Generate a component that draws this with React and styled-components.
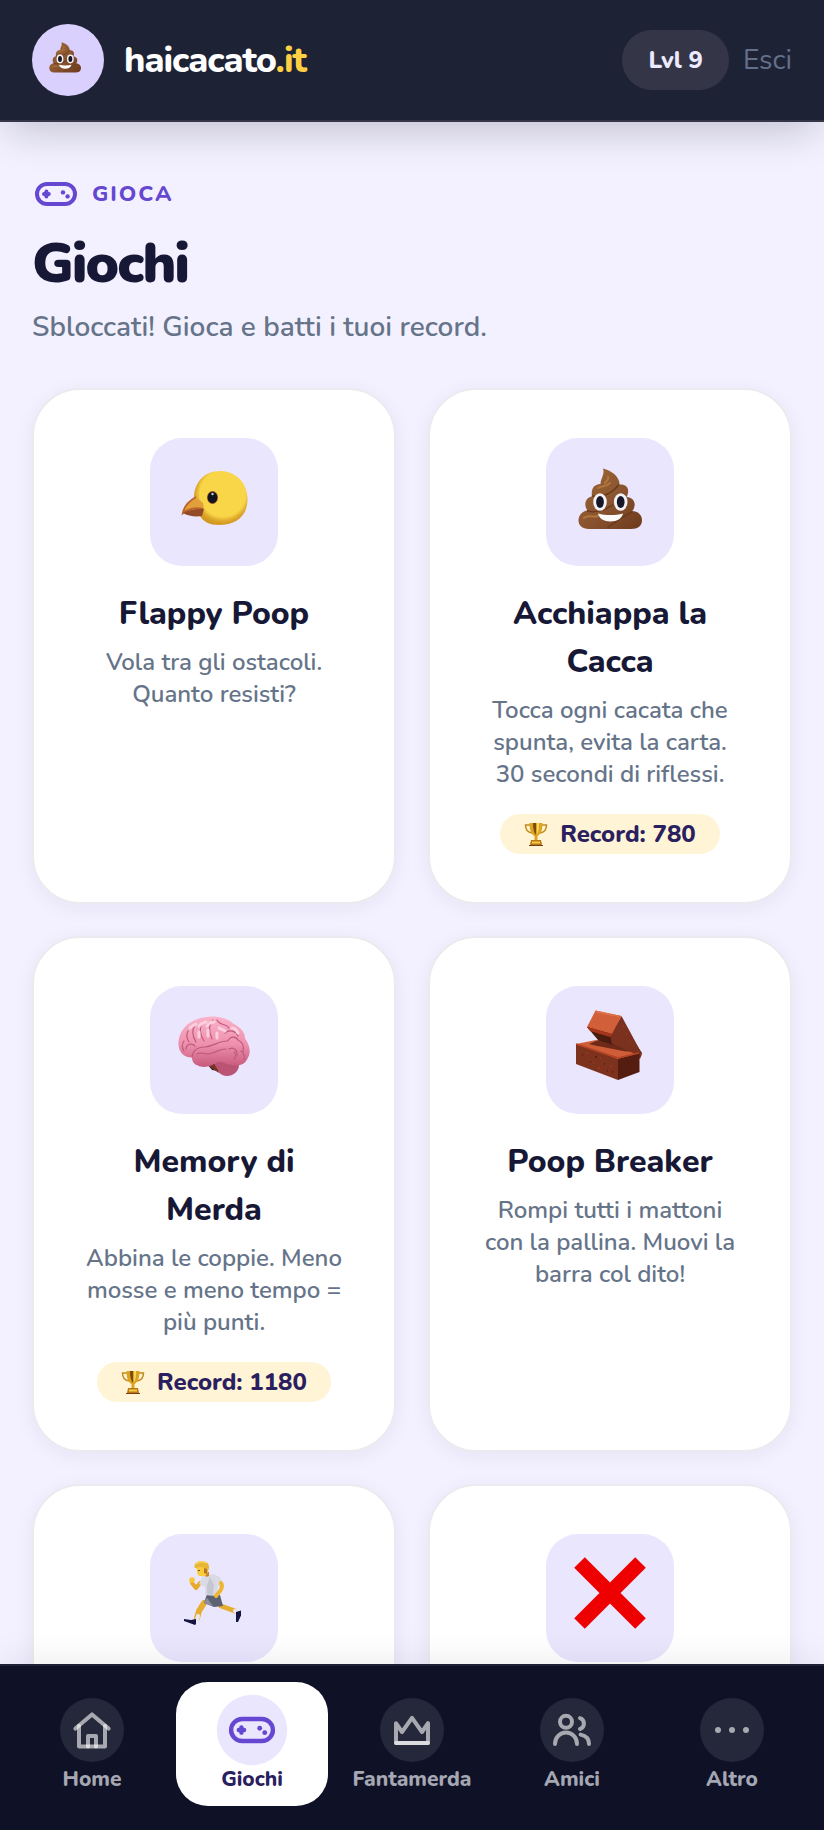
import React from "react";
import styled, { createGlobalStyle } from "styled-components";

const games = [
  {
    id: "flappy",
    icon: "bird",
    title: "Flappy Poop",
    text: "Vola tra gli ostacoli. Quanto resisti?",
  },
  {
    id: "acchiappa",
    icon: "poop",
    title: "Acchiappa la Cacca",
    text: "Tocca ogni cacata che spunta, evita la carta. 30 secondi di riflessi.",
    record: 780,
  },
  {
    id: "memory",
    icon: "brain",
    title: "Memory di Merda",
    text: "Abbina le coppie. Meno mosse e meno tempo = più punti.",
    record: 1180,
  },
  {
    id: "breaker",
    icon: "brick",
    title: "Poop Breaker",
    text: "Rompi tutti i mattoni con la pallina. Muovi la barra col dito!",
  },
  { id: "runner", icon: "runner" },
  { id: "cross", icon: "cross" },
];

const tabs = [
  { id: "home", label: "Home" },
  { id: "giochi", label: "Giochi" },
  { id: "fantamerda", label: "Fantamerda" },
  { id: "amici", label: "Amici" },
  { id: "altro", label: "Altro" },
];

const Bird = () => (
  <>
    <defs>
      <radialGradient id="birdHead" cx="0.54" cy="0.42" r="0.56">
        <stop offset="0.76" stopColor="#f9d648" />
        <stop offset="0.9" stopColor="#dfa92b" />
        <stop offset="1" stopColor="#d39a22" />
      </radialGradient>
    </defs>
    <path
      d="M44 60c0-16 11-27 26-27 16 0 27.500 12 27.500 28 0 17-11 26-29 26-9 0-14-3-17-7-5-5-7.500-12-7.500-20z"
      fill="url(#birdHead)"
    />
    <path d="M46 59c-7 4-12 10-13 16l12 2 9-5-1-7z" fill="#e2a03a" />
    <path d="M46 59c-7 4-12 10-13 16 5-4 12-6 20-4" fill="none" stroke="#bd632b" strokeWidth="2" />
    <path d="M33 75c6-3 13-4.500 21-4l-2 7c-7 1-14 0-19-3z" fill="#934a27" />
    <ellipse cx="62.500" cy="59.500" rx="5.500" ry="6.500" fill="#9b5a1c" />
    <ellipse cx="62.500" cy="59.500" rx="4.800" ry="5.800" fill="#11131f" />
    <circle cx="62.500" cy="56" r="1.200" fill="#c9cde0" />
  </>
);

const Poop = () => (
  <>
    <defs>
      <linearGradient id="poopTier" x1="0" y1="0" x2="1" y2="1">
        <stop offset="0" stopColor="#a06a35" />
        <stop offset="0.5" stopColor="#8b5530" />
        <stop offset="1" stopColor="#6d3a1c" />
      </linearGradient>
    </defs>
    <path
      d="M57 30.500c9 2 17 9 16.500 16 6-.5 9.500 3 8.500 8-.3 2-.8 3.500-1.500 4.500 6 0 9 5 8 9-.3 2-1 4-2.500 5 6 0 10 4 10 9 0 6-4 9-11 9H43c-7 0-10.500-4-10.500-8.500 0-5.500 4-9.500 9-10-4-5-2.500-13 4.500-14-1-7 1-12 8.500-12.500 0-6 4.500-9 2.500-15.500z"
      fill="url(#poopTier)"
    />
    <path
      d="M46.500 58c10 2 20-3 26-11M41.500 73c8 2 18-1 25-6M62 89c6-4 14-10 24-15"
      fill="none"
      stroke="#693a1c"
      strokeWidth="1.500"
      strokeLinecap="round"
    />
    <path
      d="M52 50c3-2 8-1 12-5M38 80c4-4 9 0 14-2M62 39c1 2-1 4-3 6"
      fill="none"
      stroke="#b0763e"
      strokeWidth="2"
      strokeLinecap="round"
    />
    <ellipse cx="54" cy="64" rx="6.800" ry="8.800" fill="#f3f3f7" />
    <ellipse cx="74.700" cy="64" rx="6.800" ry="8.800" fill="#f3f3f7" />
    <ellipse cx="54" cy="64" rx="3.900" ry="6" fill="#16182a" />
    <ellipse cx="74.700" cy="64" rx="3.900" ry="6" fill="#16182a" />
    <path d="M52 75.500c8 2 17 2 25 0-1 5-6 8-12.500 8s-11.500-3-12.500-8z" fill="#fafafa" />
  </>
);

const Brain = () => (
  <>
    <defs>
      <linearGradient id="brainTop" x1="0" y1="0" x2="0" y2="1">
        <stop offset="0" stopColor="#f9b3ca" />
        <stop offset="0.55" stopColor="#ee90ae" />
        <stop offset="1" stopColor="#c75a7c" />
      </linearGradient>
    </defs>
    <path d="M57 78l8 0 4 7-7-1z" fill="#30212f" />
    <path d="M64 77c6-4 22-4 25 0 1 7-5 13-12 13s-11-6-13-13z" fill="#bb5474" />
    <path d="M62 77c3 2 6 6 7 10-5-3-9-6-13-9z" fill="#7a3325" />
    <path
      d="M28.500 59C28 42 42 31 62 30.500c10 0 17 3 21 7 8 4 12 9 12 15 5 7 6 14 3 19-2 6-7 8-12 8-6 0-12-3-18-4-6 5-15 7-20 4-4-1-6-4-6-8-9 0-13-6-13.500-12.500z"
      fill="url(#brainTop)"
    />
    <path
      d="M42 71c1-7 6-10 13-10 9-1 14-6 22-6M45 60c-4-4-9-1-9 3M38 45c-2 4-1 8 1 11M45 39c-4 6-2 12 1 17M53 36c-4 6-3 13 1 19M63 34c-5 5-4 12-1 19M67 34c3 6 9 3 12 8M75 47c4-4 11-2 13 3M78 55c2-5 8-5 10-1 5 2 6 7 5 12M79 63c5-3 9 2 8 7M84 73c2-2 2-5 0-7M91 65c3 2 4 6 3 9M47 68c5-3 9 2 15-1 5-1 8-4 14-4M34 55c-2 3-2 7 0 10"
      fill="none"
      stroke="#c05a7c"
      strokeWidth="1.200"
      strokeLinecap="round"
    />
    <path
      d="M40 42c2-2 3-3 6-4M49 40c2-2 4-4 7-4M57 40c2-3 4-4 7-4M69 42c3 1 4 2 6 3M82 42c3 0 5 3 6 5M58 44v6M67 47v5M49 46v5"
      fill="none"
      stroke="#fbcfdd"
      strokeWidth="3"
      strokeLinecap="round"
    />
  </>
);

const Brick = () => (
  <>
    <path d="M30 58l20-4 43.500 13-21.500 8z" fill="#cf5d38" />
    <path d="M43 58l12-5 33 12-13 1z" fill="#6d2a18" />
    <path d="M52 60l20 4 16 3-14 4z" fill="#cf5d38" />
    <path d="M41 41l11 13 18 6 24 9 2-2-19-28z" fill="#4d1c10" />
    <path d="M75.500 30l20.500 38-2 5-7-6-21-9-2-9z" fill="#7a321e" />
    <path d="M49.500 24.500l26 5.500L66 48l-25-7z" fill="#d15f39" />
    <path d="M41 41l25 7-2 3-20-6z" fill="#a53418" />
    <path d="M49.500 24.500l26 5.500-3 1-22-4z" fill="#dd7046" />
    <path d="M30 58l42 15v21L30 78z" fill="#7d321e" />
    <path d="M72 73l21.500-6v19L72 94z" fill="#551c10" />
    <path d="M30 58l42 14 21-5" fill="none" stroke="#b34326" strokeWidth="1.500" />
    <path d="M36 69h1M49 71h2M58 78h1M66 86h1M82 77h1M44 76h1M61 85h1" stroke="#3f1208" strokeWidth="1" />
    <path d="M40 67h2M47 77h1M54 72h1M64 80h2M52 82h2M77 40h1M80 48h1M84 56h1" stroke="#b03a1b" strokeWidth="1" />
  </>
);

const Runner = () => (
  <>
    <g fill="none" strokeLinecap="round" strokeLinejoin="round">
      <path d="M50 49l-4 5-4-5" stroke="#e6a929" strokeWidth="4" />
      <path d="M54 69l-5 8-2 7" stroke="#e6ae2e" strokeWidth="6" />
      <path d="M71 72l14 5" stroke="#e6ae2e" strokeWidth="5" />
      <path d="M48 82l-1 4M85 77l3 1" stroke="#e8e8f2" strokeWidth="4" />
    </g>
    <circle cx="42" cy="46" r="2.800" fill="#f8c737" />
    <path d="M57 60l13 1 3 11-9 1-10-4z" fill="#5d6273" />
    <path d="M63 72l-9-3 3-5z" fill="#8a8fa2" />
    <path d="M53 42l10-2 7 3 3 6-5 4-2 9-11-1v-8l-6-3z" fill="#d9dae3" />
    <path d="M60 43l4 8-1 10-6-1v-9z" fill="#c4c6d1" />
    <path d="M71 49c3 5-2 9-5 13" fill="none" stroke="#efb52f" strokeWidth="4" strokeLinecap="round" />
    <path d="M54 38h5v4l-3 1z" fill="#c98424" />
    <path d="M46 33h12v5c-1 3-4 5-7 4-3 0-4-2-4-5z" fill="#f9cc3a" />
    <path d="M44.500 34c-.5-5 2.500-7 7-7 5 0 8 3 7.500 7l-1.500 5-2.500-5-4-1z" fill="#e9b534" />
    <path d="M46 30c2-2 6-3 10-1" fill="none" stroke="#f8d65a" strokeWidth="1.500" />
    <path d="M54 34l3 1v5l-3-1z" fill="#b6742d" />
    <path d="M48 36.500h2" stroke="#6b4417" strokeWidth="1" />
    <path d="M34 85l7 1 5-1v5l-1 1-11-4z" fill="#15153f" />
    <path d="M86 78l5-1.500v5L88 88l-2 0z" fill="#15153f" />
  </>
);

const Cross = () => (
  <path d="M33.500 28.500l61 61M94.500 28.500l-61 61" fill="none" stroke="#ee0000" strokeWidth="15" />
);

const drawings = {
  bird: Bird,
  poop: Poop,
  brain: Brain,
  brick: Brick,
  runner: Runner,
  cross: Cross,
};

const Emoji = ({ name, size, box = "0 0 128 128" }) => {
  const Drawing = drawings[name];
  return (
    <svg width={size} height={size} viewBox={box} aria-hidden="true">
      <Drawing />
    </svg>
  );
};

const Trophy = () => (
  <svg width="24" height="24" viewBox="0 0 24 24" aria-hidden="true">
    <path
      d="M7 3H1.500c0 5 2.500 7.500 6.500 8M17 3h5.500c0 5-2.500 7.500-6.500 8"
      fill="none"
      stroke="#c08a1e"
      strokeWidth="1.500"
    />
    <path d="M5.500 1h13c0 7-1.500 11-5 13v4h-3v-4c-3.500-2-5-6-5-13z" fill="#dda51f" />
    <path d="M9 1h3v12c-2-2-3-6-3-12z" fill="#7c4a12" />
    <path d="M13 1h2c0 6-.5 9-2 11z" fill="#f7d95e" />
    <path d="M7 18h10l1 5H6z" fill="#b97817" />
    <path d="M8 19.500h8v2H8z" fill="#f3cb45" />
    <path d="M5 23h14v1H5z" fill="#7c3d14" />
  </svg>
);

const LineIcon = ({ name }) => (
  <svg
    width="48"
    height="48"
    viewBox="0 0 24 24"
    fill="none"
    stroke="currentColor"
    strokeWidth="2"
    strokeLinecap="round"
    strokeLinejoin="round"
    aria-hidden="true"
  >
    {name === "home" && (
      <>
        <path d="M3.700 11.300L12 4.200l8.300 7.100" />
        <path d="M5.500 10v10.200h13V10" />
        <path d="M10 20.200V15h4v5.200" />
      </>
    )}
    {name === "giochi" && (
      <>
        <rect x="2.500" y="7" width="19" height="10" rx="5" />
        <path d="M7.200 10.800v2.400M6 12h2.400" />
        <circle cx="15.500" cy="11.200" r="1.100" fill="currentColor" stroke="none" />
        <circle cx="17.800" cy="13.200" r="1.100" fill="currentColor" stroke="none" />
      </>
    )}
    {name === "fantamerda" && (
      <>
        <path d="M4 18.500V8.600l3 4.400 5-7.100 5 7.100 3-4.400v9.900z" />
        <path d="M4 18.500h16" />
      </>
    )}
    {name === "amici" && (
      <>
        <circle cx="9" cy="7.900" r="3" />
        <path d="M3.500 19c0-3.300 2.400-5.700 5.500-5.700s5.500 2.400 5.500 5.700" />
        <path d="M16 6.100c2.600.8 2.600 4.600 0 5.400" />
        <path d="M16.300 14.300c2.500.5 4.200 2.200 4.200 4.700" />
      </>
    )}
    {name === "altro" && (
      <g fill="currentColor" stroke="none">
        <circle cx="5" cy="12" r="1.500" />
        <circle cx="12" cy="12" r="1.500" />
        <circle cx="19" cy="12" r="1.500" />
      </g>
    )}
  </svg>
);

const App = () => {
  const active = "giochi";

  return (
    <>
      <GlobalStyle />
      <Screen>
        <Header>
          <Brand href="#home">
            <Logo>
              <Emoji name="poop" size={64} box="6 2 128 128" />
            </Logo>
            <BrandName>
              haicacato<span>.it</span>
            </BrandName>
          </Brand>
          <Account>
            <Level>Lvl 9</Level>
            <Logout type="button">Esci</Logout>
          </Account>
        </Header>

        <Main>
          <Eyebrow>
            <LineIcon name="giochi" />
            GIOCA
          </Eyebrow>
          <Title>Giochi</Title>
          <Subtitle>Sbloccati! Gioca e batti i tuoi record.</Subtitle>

          <Grid>
            {games.map((game) => (
              <Card key={game.id} href={`#${game.id}`}>
                <Tile>
                  <Emoji name={game.icon} size={128} />
                </Tile>
                {game.title && <CardTitle>{game.title}</CardTitle>}
                {game.text && <CardText>{game.text}</CardText>}
                {game.record && (
                  <Record>
                    <Trophy />
                    Record: {game.record}
                  </Record>
                )}
              </Card>
            ))}
          </Grid>
        </Main>

        <TabBar>
          {tabs.map((tab) => (
            <Tab key={tab.id} href={`#${tab.id}`} $active={tab.id === active}>
              <TabIcon $active={tab.id === active}>
                <LineIcon name={tab.id} />
              </TabIcon>
              <TabLabel>{tab.label}</TabLabel>
            </Tab>
          ))}
        </TabBar>
      </Screen>
    </>
  );
};

const GlobalStyle = createGlobalStyle`
  * {
    box-sizing: border-box;
  }

  body {
    margin: 0;
    background: #f3f1ff;
    font-family: Nunito, "Open Sans", "Noto Sans", sans-serif;
  }

  a {
    color: inherit;
    text-decoration: none;
  }

  svg {
    display: block;
    flex-shrink: 0;
  }
`;

const Screen = styled.div`
  display: flex;
  flex-direction: column;
  height: 100vh;
  overflow: hidden;
`;

const Header = styled.header`
  position: relative;
  z-index: 1;
  display: flex;
  align-items: center;
  justify-content: space-between;
  padding: 24px 32px;
  background: #1e2235;
  border-bottom: 2px solid #343647;
  box-shadow: 0 16px 40px -8px rgba(15, 17, 38, 0.22);
`;

const Brand = styled.a`
  display: flex;
  align-items: center;
  gap: 20px;
`;

const Logo = styled.span`
  display: flex;
  align-items: center;
  justify-content: center;
  width: 72px;
  height: 72px;
  border-radius: 50%;
  background: #d9d0fd;
`;

const BrandName = styled.span`
  color: #ffffff;
  font-size: 36px;
  font-weight: 800;
  letter-spacing: -1px;

  span {
    color: #ffd044;
  }
`;

const Account = styled.div`
  display: flex;
  align-items: center;
  gap: 14px;
`;

const Level = styled.span`
  padding: 14px 26px;
  border-radius: 30px;
  background: #343647;
  color: #ede9fe;
  font-size: 24px;
  line-height: 32px;
  font-weight: 800;
`;

const Logout = styled.button`
  padding: 0;
  border: 0;
  background: none;
  color: #64708a;
  font: inherit;
  font-size: 28px;
`;

const Main = styled.main`
  flex: 1;
  min-height: 0;
  overflow: hidden;
  padding: 48px 32px 0;
`;

const Eyebrow = styled.div`
  display: flex;
  align-items: center;
  gap: 12px;
  color: #6547d1;
  font-size: 22px;
  font-weight: 800;
  letter-spacing: 2px;
`;

const Title = styled.h1`
  margin: 10px 0 6px;
  color: #171836;
  font-size: 56px;
  line-height: 72px;
  font-weight: 900;
  letter-spacing: -2px;
`;

const Subtitle = styled.p`
  margin: 0 0 40px;
  color: #667489;
  font-size: 28px;
  line-height: 42px;
  font-weight: 600;
`;

const Grid = styled.div`
  display: grid;
  grid-template-columns: repeat(2, minmax(0, 1fr));
  gap: 32px;
`;

const Card = styled.a`
  display: flex;
  flex-direction: column;
  align-items: center;
  padding: 48px;
  border: 2px solid #ebebef;
  border-radius: 48px;
  background: #ffffff;
  box-shadow: 0 4px 20px rgba(40, 30, 90, 0.06);
  text-align: center;
`;

const Tile = styled.div`
  width: 128px;
  height: 128px;
  border-radius: 32px;
  background: #eae6fe;
`;

const CardTitle = styled.h2`
  margin: 24px 0 8px;
  color: #171836;
  font-size: 32px;
  line-height: 48px;
  font-weight: 800;
`;

const CardText = styled.p`
  margin: 0;
  color: #667489;
  font-size: 24px;
  line-height: 32px;
  font-weight: 600;
`;

const Record = styled.div`
  display: flex;
  align-items: center;
  gap: 12px;
  margin-top: 24px;
  padding: 4px 24px;
  border-radius: 20px;
  background: #fff4d6;
  color: #2a2060;
  font-size: 24px;
  line-height: 32px;
  font-weight: 800;
`;

const TabBar = styled.nav`
  position: relative;
  z-index: 1;
  display: grid;
  grid-template-columns: repeat(5, minmax(0, 1fr));
  gap: 8px;
  padding: 16px 16px 24px;
  border-top: 2px solid #1e2235;
  background: #0f1126;
  box-shadow: 0 -8px 32px rgba(15, 17, 38, 0.06);
`;

const Tab = styled.a`
  display: flex;
  flex-direction: column;
  align-items: center;
  gap: 4px;
  padding: 16px 0 14px;
  border-radius: 32px;
  background: ${({ $active }) => ($active ? "#ffffff" : "transparent")};
  color: ${({ $active }) => ($active ? "#2a2060" : "#a5a7b2")};
`;

const TabIcon = styled.span`
  display: flex;
  align-items: center;
  justify-content: center;
  width: 64px;
  height: 64px;
  border-radius: 50%;
  background: ${({ $active }) => ($active ? "#eae6fe" : "#25273a")};
  color: ${({ $active }) => ($active ? "#6547d1" : "rgba(255, 255, 255, 0.6)")};
  transform: ${({ $active }) => ($active ? "scale(1.1)" : "none")};
`;

const TabLabel = styled.span`
  font-size: 21px;
  line-height: 26px;
  font-weight: 800;
`;

export default App;
